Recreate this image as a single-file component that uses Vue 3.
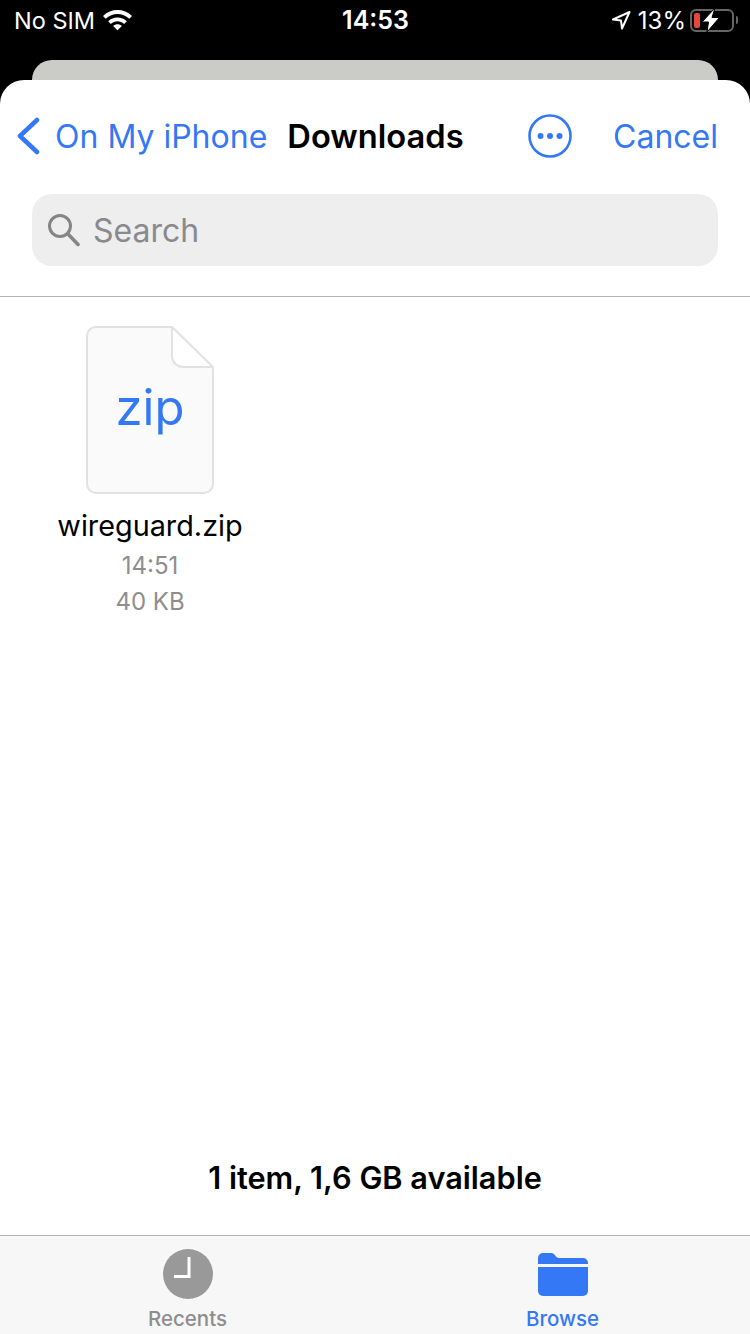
<template>
  <div class="screen">
    <div class="status-bar">
      <div class="status-left">
        <span>No SIM</span>
        <svg class="wifi" width="29" height="24" viewBox="1 0 28 23">
          <path d="M1 8.5C8.8 1 21.2 1 29 8.5L26.4 11.3C20 5.2 10 5.2 3.600 11.300Z" fill="#fff" />
          <path d="M6 13.600C11 8.800 19 8.800 24 13.600L21.400 16.300C17.700 12.900 12.300 12.900 8.600 16.300Z" fill="#fff" />
          <path d="M10.800 18.300C13.200 16.100 16.800 16.100 19.200 18.300L15 22.400Z" fill="#fff" />
        </svg>
      </div>
      <span class="status-time">14:53</span>
      <div class="status-right">
        <svg width="20" height="20" viewBox="0 0 20 20">
          <path d="M18.500 2L2 9.500L10 10.500L11 18.500Z" fill="none" stroke="#fff" stroke-width="2" stroke-linejoin="round" />
        </svg>
        <span class="status-pct">13%</span>
        <div class="battery">
          <div class="battery-body">
            <span class="battery-level"></span>
          </div>
          <span class="battery-tip"></span>
          <svg class="bolt" width="20" height="26" viewBox="0 0 20 26">
            <path d="M14 1L1 15H7.500L6 25L18.500 10.500H11Z" fill="#fff" stroke="#000" stroke-width="1" />
          </svg>
        </div>
      </div>
    </div>

    <div class="card-behind"></div>

    <div class="sheet">
      <div class="nav">
        <div class="nav-back">
          <svg width="24" height="38" viewBox="0 0 24 38">
            <path d="M21 3L4 19L21 35" fill="none" stroke="#3478f6" stroke-width="4.500" stroke-linecap="round" stroke-linejoin="round" />
          </svg>
          <span>On My iPhone</span>
        </div>
        <h1 class="nav-title">Downloads</h1>
        <svg class="nav-more" width="44" height="44" viewBox="0 0 44 44">
          <circle cx="22" cy="22" r="20.500" fill="none" stroke="#3478f6" stroke-width="2.600" />
          <circle cx="12.500" cy="22" r="3" fill="#3478f6" />
          <circle cx="22" cy="22" r="3" fill="#3478f6" />
          <circle cx="31.500" cy="22" r="3" fill="#3478f6" />
        </svg>
        <span class="nav-cancel">Cancel</span>
      </div>

      <div class="search">
        <svg width="34" height="34" viewBox="0 0 34 34">
          <circle cx="14" cy="13" r="10.500" fill="none" stroke="#858585" stroke-width="3" />
          <path d="M22 21L32 31.500" stroke="#858585" stroke-width="3.500" stroke-linecap="round" />
        </svg>
        <span>Search</span>
      </div>

      <div class="files">
        <div class="file" v-for="file in files" :key="file.name">
          <div class="file-icon">
            <svg width="128" height="168" viewBox="0 0 128 168">
              <path
                d="M10 1H86L127 42V158A9 9 0 0 1 118 167H10A9 9 0 0 1 1 158V10A9 9 0 0 1 10 1Z"
                fill="#fafafa"
                stroke="#e2e2e2"
                stroke-width="2"
              />
              <path
                d="M86 1V30A11 11 0 0 0 97 41H127L86 1Z"
                fill="#fff"
                stroke="#e2e2e2"
                stroke-width="2"
                stroke-linejoin="round"
              />
            </svg>
            <span class="file-ext">{{ file.ext }}</span>
          </div>
          <div class="file-name">{{ file.name }}</div>
          <div class="file-meta">{{ file.time }}</div>
          <div class="file-meta">{{ file.size }}</div>
        </div>
      </div>

      <div class="summary">1 item, 1,6 GB available</div>

      <div class="tabbar">
        <div class="tab">
          <div class="tab-icon">
            <svg width="50" height="50" viewBox="0 0 50 50">
              <circle cx="25" cy="25" r="25" fill="#999" />
              <path d="M26 8V27.500H11" fill="none" stroke="#fff" stroke-width="3" />
            </svg>
          </div>
          <span>Recents</span>
        </div>
        <div class="tab active">
          <div class="tab-icon">
            <svg width="50" height="43" viewBox="0 0 50 43">
              <path d="M0 11V5A5 5 0 0 1 5 0H13C17 0 17.500 5 21 5H45A5 5 0 0 1 50 10V11Z" fill="#3478f6" />
              <path d="M0 14H50V38A5 5 0 0 1 45 43H5A5 5 0 0 1 0 38Z" fill="#3478f6" />
            </svg>
          </div>
          <span>Browse</span>
        </div>
      </div>
    </div>
  </div>
</template>

<script setup>
const files = [
  { name: 'wireguard.zip', ext: 'zip', time: '14:51', size: '40 KB' }
]
</script>

<style>
html,
body {
  margin: 0;
  background: #000;
}
</style>

<style scoped>
.screen {
  width: 750px;
  height: 1334px;
  background: #000;
  display: flex;
  flex-direction: column;
  overflow: hidden;
  font-family: Inter, "Liberation Sans", sans-serif;
}

.status-bar {
  height: 60px;
  flex: none;
  padding: 0 12px 0 14px;
  box-sizing: border-box;
  display: grid;
  grid-template-columns: 1fr auto 1fr;
  align-items: start;
  color: #fff;
  font-size: 23.5px;
  line-height: 41px;
}

.status-left {
  display: flex;
  align-items: center;
  gap: 8px;
  height: 41px;
}

.wifi {
  margin-top: -3px;
}

.status-time {
  font-weight: 600;
  font-size: 25px;
  margin-left: -1px;
}

.status-right {
  display: flex;
  align-items: center;
  justify-content: flex-end;
  gap: 7px;
  height: 40px;
}

.status-pct {
  font-size: 24px;
}

.battery {
  position: relative;
  display: flex;
  align-items: center;
  gap: 2px;
  margin-left: -3px;
}

.battery-body {
  width: 44px;
  height: 23px;
  box-sizing: border-box;
  border: 2px solid #666;
  border-radius: 6px;
  padding: 2px;
}

.battery-level {
  display: block;
  width: 6px;
  height: 100%;
  background: #e5483a;
  border-radius: 2px;
}

.battery-tip {
  width: 2px;
  height: 8px;
  background: #666;
  border-radius: 0 2px 2px 0;
}

.bolt {
  position: absolute;
  left: 11px;
  top: -2px;
}

.card-behind {
  height: 20px;
  flex: none;
  margin: 0 32px;
  background: #cbccc8;
  border-radius: 20px 20px 0 0;
}

.sheet {
  flex: 1;
  min-height: 0;
  background: #fff;
  border-radius: 24px 24px 0 0;
  display: flex;
  flex-direction: column;
}

.nav {
  height: 112px;
  margin-bottom: 2px;
  flex: none;
  padding: 0 32px 0 16px;
  box-sizing: border-box;
  display: flex;
  align-items: center;
  font-size: 32px;
  color: #3478f6;
}

.nav-back {
  display: flex;
  align-items: center;
  gap: 15px;
}

.nav-title {
  margin: 0 0 0 20px;
  font-size: 32.7px;
  font-weight: 600;
  color: #000;
}

.nav-more {
  margin-left: 64px;
}

.nav-cancel {
  margin-left: auto;
}

.search {
  height: 72px;
  flex: none;
  margin: 0 32px;
  padding-left: 14px;
  background: #eeeeee;
  border-radius: 20px;
  display: flex;
  align-items: center;
  gap: 13px;
  font-size: 32px;
  color: #8a8a8e;
}

.files {
  flex: 1;
  margin-top: 30px;
  padding-top: 29px;
  border-top: 1px solid #b4b4b4;
}

.file {
  width: 200px;
  margin-left: 50px;
  display: flex;
  flex-direction: column;
  align-items: center;
}

.file-icon {
  position: relative;
  width: 128px;
  height: 168px;
}

.file-ext {
  position: absolute;
  left: 0;
  right: 0;
  top: 51px;
  text-align: center;
  font-size: 49px;
  line-height: 62px;
  color: #3478f6;
}

.file-name {
  margin: 14px 0 4px;
  font-size: 28.8px;
  line-height: 36px;
  color: #000;
  white-space: nowrap;
}

.file-meta {
  font-size: 24px;
  line-height: 36px;
  color: #8e8e8e;
}

.summary {
  flex: none;
  height: 73px;
  text-align: center;
  font-size: 30.7px;
  font-weight: 600;
  line-height: 32px;
  color: #000;
}

.tabbar {
  height: 98px;
  flex: none;
  background: #f7f7f7;
  border-top: 1px solid #b4b4b4;
  display: grid;
  grid-template-columns: 1fr 1fr;
}

.tab {
  padding-top: 13px;
  display: flex;
  flex-direction: column;
  align-items: center;
  font-size: 20.5px;
  line-height: 28px;
  color: #8e8e8e;
  font-weight: 500;
}

.tab.active {
  color: #3478f6;
}

.tab-icon {
  height: 50px;
  margin-bottom: 6px;
  display: flex;
  align-items: center;
}
</style>
